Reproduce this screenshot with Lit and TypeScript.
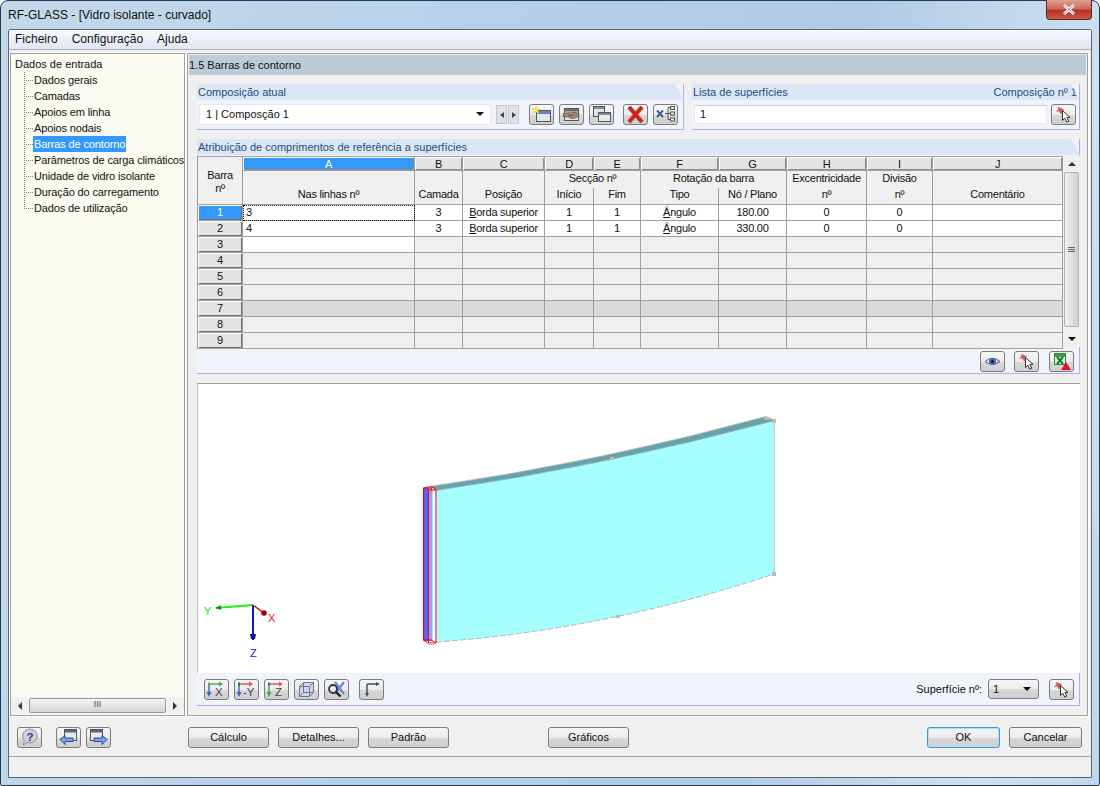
import { css, html, LitElement, TemplateResult } from "lit";
import { customElement } from "lit/decorators.js";

const pin = html`<svg viewBox="0 0 23 19" width="23" height="19">
  <path d="M6 2l6 2.500-2 1 1 2.500-2 1-2-3-2.500 1 2-3z" fill="#e0505c" stroke="#c08088" stroke-width=".5" />
  <path d="M10.500 5.500v10l2.300-2.300 2 4 2-1-2-3.800h3.200z" fill="#fff" stroke="#333" />
</svg>`;

const axisView = (a: string, b: string, c: string, label: string) => html`<svg viewBox="0 0 23 19" width="23" height="19">
  <path d="M4 4h11" stroke=${a} stroke-width="1.500" /><path d="M14 1.500l4 2.500-4 2.500z" fill=${a} />
  <path d="M4 3v10" stroke=${b} stroke-width="1.500" /><path d="M1.500 12l2.500 5 2.500-5z" fill=${b} />
  <path d="M3 4h2" stroke=${c} stroke-width="3" />
  <text x=${label.length > 1 ? 8 : 10} y="16" font-size="11.500" fill="#444" font-family="Liberation Sans">${label}</text>
</svg>`;

const ICONS: Record<string, TemplateResult> = {
  pin,
  eye: html`<svg viewBox="0 0 23 19" width="23" height="19">
    <path d="M4 9.500Q11.500 3 19 9.500Q11.500 15 4 9.500z" fill="#e8e8f0" stroke="#555" />
    <circle cx="11.500" cy="9.500" r="3.600" fill="#4468d4" /><circle cx="11.500" cy="9.500" r="1.500" fill="#111" />
  </svg>`,
  excel: html`<svg viewBox="0 0 23 19" width="23" height="19">
    <rect x="4.500" y="1.500" width="11" height="11" fill="#d8efd8" stroke="#2e8b3c" />
    <rect x="5" y="2" width="10" height="3" fill="#3aa04c" />
    <path d="M7 5l6 7M13 5l-6 7" stroke="#1e7a30" stroke-width="2" />
    <path d="M11 18l5-8 5 8z" fill="#e01020" />
  </svg>`,
  add: html`<svg viewBox="0 0 23 19" width="23" height="19">
    <rect x="6.500" y="5.500" width="14" height="11" fill="#e4e8ee" stroke="#555" />
    <rect x="7" y="6" width="13" height="3" fill="#6488bc" />
    <path d="M6 1l1.200 2.600 2.800.3-2.100 1.800.7 2.800L6 7 3.400 8.500l.7-2.800L2 3.900l2.800-.3z" fill="#f8e860" stroke="#d8c440" stroke-width=".5" />
  </svg>`,
  hand: html`<svg viewBox="0 0 23 19" width="23" height="19">
    <rect x="4.500" y="3.500" width="14" height="12" fill="#e0e0e0" stroke="#555" />
    <rect x="5" y="4" width="13" height="2.500" fill="#6a6a6a" />
    <path d="M3 9l5-1.500 3 .5 3-1 5 1.500v2.500l-4 2-3.500.5-3-1.500-5.500-.5z" fill="#a08878" stroke="#4a3830" stroke-width=".6" />
    <path d="M8 10l3 .5 3-1" stroke="#4a3830" stroke-width=".6" fill="none" />
  </svg>`,
  copy: html`<svg viewBox="0 0 23 19" width="23" height="19">
    <rect x="3.500" y="1.500" width="11" height="10" fill="#e4e4e4" stroke="#555" />
    <rect x="4" y="2" width="10" height="2" fill="#7a90aa" />
    <rect x="8.500" y="7.500" width="12" height="9" fill="#ececec" stroke="#555" />
    <rect x="9" y="8" width="11" height="2" fill="#7a90aa" />
  </svg>`,
  remove: html`<svg viewBox="0 0 23 19" width="23" height="19">
    <path d="M5 2l13 15M18 2L5 17" stroke="#a8706c" stroke-width="4.500" />
    <path d="M5 2l13 15M18 2L5 17" stroke="#d81e1a" stroke-width="3" />
  </svg>`,
  tree: html`<svg viewBox="0 0 23 19" width="23" height="19">
    <path d="M3 5.500l6 6.500M9 5.500L3 12" stroke="#3a5ca8" stroke-width="2" />
    <path d="M11 8.500h3M14 2.500v12M14 2.500h2M14 8.500h2M14 14.500h2" stroke="#555" fill="none" />
    <rect x="16.500" y="1.500" width="4" height="3" fill="#e8e8e8" stroke="#555" />
    <rect x="16.500" y="7" width="4" height="3" fill="#e8e8e8" stroke="#555" />
    <rect x="16.500" y="13" width="4" height="3" fill="#e8e8e8" stroke="#555" />
  </svg>`,
  viewX: axisView("#40b050", "#3c68c8", "#70a060", "X"),
  viewY: axisView("#e05858", "#3c68c8", "#1e7a30", "-Y"),
  viewZ: axisView("#e05858", "#38b050", "#3c68c8", "Z"),
  cube: html`<svg viewBox="0 0 23 19" width="23" height="19">
    <path d="M8.500 2.500h10v10l-4 4h-10v-10z" fill="#ccd4e6" stroke="#6a7898" />
    <path d="M4.500 6.500h10v10M14.500 6.500l4-4M8.500 2.500v10h10M8.500 12.500l-4 4" fill="none" stroke="#6a7898" />
  </svg>`,
  zoomX: html`<svg viewBox="0 0 23 19" width="23" height="19">
    <path d="M10 2l9 12M19 2l-9 12" stroke="#6488dc" stroke-width="2.200" />
    <circle cx="8" cy="9" r="4" fill="none" stroke="#333" stroke-width="1.800" />
    <path d="M11 12l4.500 4.500" stroke="#222" stroke-width="2.400" />
  </svg>`,
  axes: html`<svg viewBox="0 0 23 19" width="23" height="19">
    <path d="M7 4h10M7 4v10" stroke="#3f4f74" stroke-width="1.500" fill="none" />
    <path d="M16 2l4 2-4 2zM5 13l2 4 2-4z" fill="#3f4f74" />
  </svg>`,
  help: html`<svg viewBox="0 0 23 19" width="23" height="19">
    <path d="M12 1a7.500 7 0 1 1-3 13.500L5.500 17.500l.8-5A7.500 7 0 0 1 12 1z" fill="#ccd0da" stroke="#8890a4" />
    <text x="12" y="12.500" text-anchor="middle" font-size="11.500" font-weight="700" fill="#303c70" font-family="Liberation Sans">?</text>
  </svg>`,
  back: html`<svg viewBox="0 0 23 19" width="23" height="19">
    <rect x="7.500" y="1.500" width="12" height="11" fill="#e8eaf0" stroke="#555" />
    <rect x="8" y="2" width="11" height="2.500" fill="#556684" />
    <path d="M3 11.500l5-4v2.500h8v3.500H8V16.500z" fill="#78a4e4" stroke="#2a4a90" />
  </svg>`,
  forward: html`<svg viewBox="0 0 23 19" width="23" height="19">
    <rect x="3.500" y="1.500" width="12" height="11" fill="#e8eaf0" stroke="#555" />
    <rect x="4" y="2" width="11" height="2.500" fill="#556684" />
    <path d="M20 11.500l-5-4v2.500H7v3.500h8V16.500z" fill="#78a4e4" stroke="#2a4a90" />
  </svg>`,
};

const TREE_ITEMS = [
  "Dados gerais",
  "Camadas",
  "Apoios em linha",
  "Apoios nodais",
  "Barras de contorno",
  "Parâmetros de carga climáticos",
  "Unidade de vidro isolante",
  "Duração do carregamento",
  "Dados de utilização",
];

const COLUMNS = [45, 172, 48, 82, 49, 47, 78, 68, 80, 66, 130];
const LETTERS = ["A", "B", "C", "D", "E", "F", "G", "H", "I", "J"];

const ROWS = [
  ["3", "3", "B|orda superior", "1", "1", "Â|ngulo", "180.00", "0", "0", ""],
  ["4", "3", "B|orda superior", "1", "1", "Â|ngulo", "330.00", "0", "0", ""],
];

@customElement("app-root")
export class AppRoot extends LitElement {
  static styles = css`
    * {
      box-sizing: border-box;
      margin: 0;
      padding: 0;
    }

    :host {
      display: block;
      width: 1100px;
      height: 786px;
      overflow: hidden;
      font-family: "Liberation Sans", Arial, sans-serif;
      font-size: 11px;
      line-height: 14px;
      color: #111;
    }

    .window {
      width: 1100px;
      height: 786px;
      display: flex;
      flex-direction: column;
      padding: 0 7px 7px 7px;
      border: 1px solid #2c3a48;
      border-radius: 8px 8px 2px 2px;
      background: linear-gradient(100deg, #c4d8ea 0%, #b5d1ea 40%, #b0cce6 70%, #cfe0f0 90%, #c0d8ee 100%);
    }

    .titlebar {
      flex: 0 0 28px;
      display: flex;
      justify-content: space-between;
      align-items: flex-start;
    }

    .title {
      font-size: 12px;
      line-height: 28px;
      color: #111;
    }

    .close {
      width: 46px;
      height: 20px;
      margin-top: -1px;
      border: 1px solid #5a2a28;
      border-top: none;
      border-radius: 0 0 4px 4px;
      background: linear-gradient(#e0a090 0%, #cf6a5c 45%, #b8322a 55%, #c85a48 100%);
      display: flex;
      align-items: center;
      justify-content: center;
    }

    .client {
      flex: 1;
      min-height: 0;
      display: flex;
      flex-direction: column;
      background: #f0f0f0;
      border: 1px solid #5b6874;
      border-radius: 2px 2px 0 0;
    }

    .menu {
      flex: 0 0 20px;
      display: flex;
      gap: 14px;
      padding-left: 6px;
      font-size: 12px;
      line-height: 19px;
      background: linear-gradient(#f8fafe, #dfe7f3);
      border-bottom: 1px solid #a8b4c4;
    }

    .work {
      flex: 0 0 666px;
      display: flex;
      gap: 2px;
      padding: 3px 3px 0 1px;
    }

    .tree {
      flex: 0 0 175px;
      min-width: 0;
      display: flex;
      flex-direction: column;
      border: 1px solid #a0a0a0;
      outline: 1px solid #fff;
      background: #fbfbf2;
    }

    .tree-body {
      flex: 1;
      padding: 2px 0 0 4px;
    }

    .tree-root {
      height: 16px;
      line-height: 16px;
    }

    .tree ul {
      list-style: none;
      margin-left: 9px;
      background: repeating-linear-gradient(to bottom, #888 0 1px, transparent 1px 2px) left top / 1px calc(100% - 7px)
        no-repeat;
    }

    .tree li {
      display: flex;
      align-items: center;
      height: 16px;
      line-height: 16px;
      white-space: nowrap;
      letter-spacing: -0.13px;
    }

    .tree li::before {
      content: "";
      flex: 0 0 9px;
      border-top: 1px dotted #888;
    }

    .tree li span {
      padding: 0 1px;
    }

    .tree li.selected span {
      background: #3399ff;
      color: #fff;
    }

    .hscroll {
      flex: 0 0 17px;
      display: flex;
      align-items: center;
      background: #f0f0f0;
      margin-bottom: 1px;
    }

    .hscroll .arrow {
      flex: 0 0 18px;
      display: flex;
      justify-content: center;
    }

    .hscroll .thumb {
      flex: 1;
      height: 15px;
      border: 1px solid #9a9a9a;
      border-radius: 2px;
      background: linear-gradient(#f4f4f4, #d4d4d4);
      text-align: center;
      line-height: 11px;
      font-size: 9px;
      color: #444;
    }

    .tri-l,
    .tri-r,
    .tri-u,
    .tri-d {
      width: 0;
      height: 0;
      border: 3px solid transparent;
    }

    .tri-l {
      border-right: 4px solid #333;
      border-left: none;
      border-top-width: 4px;
      border-bottom-width: 4px;
    }

    .tri-r {
      border-left: 4px solid #333;
      border-right: none;
      border-top-width: 4px;
      border-bottom-width: 4px;
    }

    .tri-u {
      border-bottom: 4px solid #333;
      border-top: none;
      border-left-width: 4px;
      border-right-width: 4px;
    }

    .tri-d {
      border-top: 4px solid #111;
      border-bottom: none;
      border-left-width: 4px;
      border-right-width: 4px;
    }

    .main {
      flex: 1;
      min-width: 0;
      display: flex;
      flex-direction: column;
      border: 1px solid #a0a0a0;
      outline: 1px solid #fff;
      padding: 1px;
    }

    .strip {
      flex: 0 0 20px;
      line-height: 20px;
      padding-left: 0;
      background: #bccbd8;
    }

    .content {
      flex: 1;
      display: flex;
      flex-direction: column;
      gap: 9px;
      padding: 9px 6px 0 8px;
    }

    .top-row {
      display: flex;
      gap: 8px;
    }

    .group {
      display: flex;
      flex-direction: column;
      background: #f0f3fa;
      border-right: 1px solid #a9b0ec;
      border-bottom: 1px solid #a9b0ec;
    }

    .group-head {
      flex: 0 0 16px;
      display: flex;
      justify-content: space-between;
      padding: 1px 3px 0 1px;
      line-height: 15px;
      color: #24507e;
      background: #dce6f4;
      clip-path: polygon(0 0, calc(100% - 9px) 0, 100% 100%, 0 100%);
      margin-right: -1px;
    }

    .current {
      flex: 0 0 487px;
      height: 46px;
    }

    .surfaces {
      flex: 0 0 388px;
      height: 46px;
    }

    .group-body {
      flex: 1;
      display: flex;
      align-items: center;
      padding: 0 3px 0 2px;
    }

    .combo {
      width: 292px;
      height: 21px;
      display: flex;
      align-items: center;
      justify-content: space-between;
      padding: 0 6px 1px 6px;
      background: #fff;
      border: 1px solid #e4e8f2;
      border-radius: 2px;
    }

    .spin {
      display: flex;
      gap: 1px;
      margin-left: 5px;
      margin-right: 10px;
    }

    .spin span {
      width: 11px;
      height: 19px;
      display: flex;
      align-items: center;
      justify-content: center;
      background: #dfe1e6;
      border: 1px solid #c4c8d0;
    }

    .spin .tri-l,
    .spin .tri-r {
      border-top-width: 3px;
      border-bottom-width: 3px;
      border-left-color: #345;
      border-right-color: #345;
    }

    .tools {
      display: flex;
      gap: 5px;
    }

    .tools.split {
      margin-left: 9px;
    }

    .icon-btn {
      flex: 0 0 25px;
      width: 25px;
      height: 21px;
      display: flex;
      align-items: center;
      justify-content: center;
      border: 1px solid #7c7c7c;
      border-radius: 3px;
      background: linear-gradient(#f6f6f6 0%, #ececec 50%, #d8d8d8 52%, #cfcfcf 100%);
    }

    .text-input {
      flex: 1;
      height: 19px;
      padding-left: 5px;
      line-height: 17px;
      margin-right: 4px;
      background: #fff;
      border: 1px solid #e4e8f2;
      border-top-color: #c8ccd4;
    }

    .table-group {
      height: 235px;
    }

    .grid-wrap {
      display: flex;
      padding-top: 1px;
    }

    table {
      width: 865px;
      flex: 0 0 865px;
      table-layout: fixed;
      border-collapse: collapse;
      background: #f0f0f0;
      line-height: 13px;
      letter-spacing: -0.25px;
    }

    th,
    td {
      border: 1px solid #a0a0a0;
      font-weight: 400;
      text-align: center;
      white-space: nowrap;
      overflow: hidden;
    }

    tr.letters th {
      height: 14px;
      line-height: 12px;
      background: #e4e4e4;
      box-shadow: inset 1px 1px 0 #fff, inset -1px -1px 0 #8c8c8c;
    }

    tr.letters th.corner {
      background: #f0f0f0;
      box-shadow: none;
      vertical-align: middle;
    }

    tr.letters th.on {
      background: #3399ff;
      color: #fff;
    }

    tr.sub-a th {
      height: 17px;
    }

    tr.sub-b th {
      height: 17px;
    }

    th.bottom {
      vertical-align: bottom;
      padding-bottom: 3px;
    }

    th.no-bottom {
      border-bottom: none;
      padding-bottom: 1px;
    }

    th.no-top {
      border-top: none;
      padding-bottom: 2px;
    }

    .corner-label {
      display: block;
      line-height: 12px;
      margin-top: 1px;
    }

    tbody tr {
      height: 16px;
    }

    tbody th {
      background: #e3e3e3;
      box-shadow: inset 1px 1px 0 #fff, inset -1px -1px 0 #707070;
    }

    tbody th.on {
      background: #3399ff;
      color: #fff;
    }

    tbody td {
      background: #efefef;
    }

    tbody td.filled {
      background: #fff;
    }

    tbody td.left {
      text-align: left;
      padding-left: 3px;
    }

    tbody td.focus {
      outline: 1px dotted #111;
      outline-offset: -1px;
    }

    tbody tr.band td {
      background: #dbdbdb;
    }

    .vscroll {
      flex: 0 0 17px;
      height: 191px;
      display: flex;
      flex-direction: column;
      background: #f0f0f0;
    }

    .vscroll .arrow {
      flex: 0 0 16px;
      display: flex;
      align-items: center;
      justify-content: center;
    }

    .vscroll .thumb {
      flex: 1;
      display: flex;
      align-items: center;
      justify-content: center;
      border: 1px solid #b0b0b0;
      border-radius: 2px;
      margin: 0 1px 4px;
      background: linear-gradient(90deg, #f2f2f2, #cfcfcf);
    }

    .grip {
      width: 7px;
      height: 5px;
      border-top: 1px solid #666;
      border-bottom: 1px solid #666;
      background: linear-gradient(#666, #666) center / 100% 1px no-repeat;
    }

    .table-tools {
      flex: 1;
      display: flex;
      justify-content: flex-end;
      align-items: flex-start;
      gap: 9px;
      padding: 2px 5px 0 0;
    }

    .table-tools .icon-btn:last-child {
      margin-left: 1px;
    }

    .view-group {
      height: 323px;
    }

    .canvas {
      flex: 0 0 290px;
      background: #fff;
      border-top: 1px solid #a0a0a0;
      border-left: 1px solid #c0c0c0;
      margin-right: -1px;
    }

    .canvas svg {
      display: block;
    }

    .view-tools {
      flex: 1;
      display: flex;
      align-items: center;
      gap: 5px;
      padding: 0 5px 0 7px;
    }

    .view-tools .gap {
      margin-left: 5px;
    }

    .view-tools .grow {
      flex: 1;
      text-align: right;
      padding-right: 1px;
    }

    .select {
      width: 51px;
      height: 20px;
      display: flex;
      align-items: center;
      justify-content: space-between;
      padding: 0 7px 0 4px;
      border: 1px solid #7c7c7c;
      border-radius: 3px;
      background: linear-gradient(#f6f6f6 0%, #ececec 50%, #d8d8d8 52%, #cfcfcf 100%);
    }

    .actions {
      flex: 0 0 41px;
      display: flex;
      align-items: flex-start;
      padding: 11px 9px 0 8px;
      border-bottom: 1px solid #a0a0a0;
    }

    .actions .nav {
      margin-right: 77px;
    }

    .btn {
      height: 21px;
      width: 81px;
      line-height: 19px;
      text-align: center;
      border: 1px solid #7c7c7c;
      border-radius: 3px;
      background: linear-gradient(#f6f6f6 0%, #ececec 50%, #d8d8d8 52%, #cfcfcf 100%);
    }

    .btn + .btn {
      margin-left: 9px;
    }

    .btn.graphics {
      margin-left: 99px;
    }

    .btn.ok {
      margin-left: auto;
      width: 73px;
      border-color: #3c9ad0;
      box-shadow: inset 0 0 0 1px #a8e0f8;
    }

    .btn.cancel {
      width: 73px;
    }

    .status {
      flex: 1;
    }
  `;

  private iconButton(name: string) {
    return html`<div class="icon-btn">${ICONS[name]}</div>`;
  }

  private renderTree() {
    return html`
      <div class="tree">
        <div class="tree-body">
          <div class="tree-root">Dados de entrada</div>
          <ul>
            ${TREE_ITEMS.map(
              (item, i) => html`<li class=${i === 4 ? "selected" : ""}><span>${item}</span></li>`
            )}
          </ul>
        </div>
        <div class="hscroll">
          <div class="arrow"><div class="tri-l"></div></div>
          <div class="thumb">III</div>
          <div class="arrow"><div class="tri-r"></div></div>
        </div>
      </div>
    `;
  }

  private renderCell(value: string, col: number) {
    const [first, rest] = value.split("|");
    const body = rest === undefined ? value : html`<u>${first}</u>${rest}`;
    const cls = `filled ${col === 0 ? "left" : ""}`;
    return html`<td class=${cls}>${body}</td>`;
  }

  private renderTable() {
    const empty = [3, 4, 5, 6, 7, 8, 9];
    return html`
      <table>
        <colgroup>
          ${COLUMNS.map((w) => html`<col style="width:${w}px" />`)}
        </colgroup>
        <thead>
          <tr class="letters">
            <th class="corner" rowspan="3">
              <span class="corner-label">Barra</span><span class="corner-label">nº</span>
            </th>
            ${LETTERS.map((l, i) => html`<th class=${i === 0 ? "on" : ""}>${l}</th>`)}
          </tr>
          <tr class="sub-a">
            <th class="bottom" rowspan="2">Nas linhas nº</th>
            <th class="bottom" rowspan="2">Camada</th>
            <th class="bottom" rowspan="2">Posição</th>
            <th class="no-bottom" colspan="2">Secção nº</th>
            <th class="no-bottom" colspan="2">Rotação da barra</th>
            <th class="no-bottom">Excentricidade</th>
            <th class="no-bottom">Divisão</th>
            <th class="bottom" rowspan="2">Comentário</th>
          </tr>
          <tr class="sub-b">
            <th class="no-top">Início</th>
            <th class="no-top">Fim</th>
            <th class="no-top">Tipo</th>
            <th class="no-top">Nó / Plano</th>
            <th class="no-top">nº</th>
            <th class="no-top">nº</th>
          </tr>
        </thead>
        <tbody>
          ${ROWS.map(
            (row, r) => html`<tr>
              <th class=${r === 0 ? "on" : ""}>${r + 1}</th>
              ${row.map((v, c) =>
                r === 0 && c === 0
                  ? html`<td class="filled left focus">${v}</td>`
                  : this.renderCell(v, c)
              )}
            </tr>`
          )}
          ${empty.map(
            (n) => html`<tr class=${n === 7 ? "band" : ""}>
              <th>${n}</th>
              ${LETTERS.map((_, c) => html`<td class=${n === 3 && c === 0 ? "filled" : ""}></td>`)}
            </tr>`
          )}
        </tbody>
      </table>
    `;
  }

  private renderModel() {
    return html`
      <svg width="884" height="289" viewBox="198 384 884 289">
        <path d="M436 489Q605 465 774 420V574Q605 630 436 642z" fill="#a6ffff" />
        <path d="M430 486.500Q600 462 766 416.500L775 420.500Q605 466 436 490.500z" fill="#62a4ac" stroke="#b4b0b0" stroke-width=".8" />
        <path d="M774.500 420V574" stroke="#c8c2c8" stroke-width="1" />
        <path d="M436 642Q605 630 774 574" fill="none" stroke="#b4b4b4" stroke-dasharray="6 2" />
        <rect x="423.500" y="488" width="6" height="153" fill="#6060f0" />
        <rect x="429.500" y="489" width="3" height="152" fill="#8aa4f8" />
        <path
          d="M423.500 488v152l4 3h8.500V490l-3-3h-6zM423.500 488h8M428.500 490h7.500M428.500 490v153M431.500 488v2M423.500 640h8l4 3"
          fill="none"
          stroke="#f00000"
        />
        <g fill="#c4b8b8">
          <rect x="764" y="417" width="6" height="3" />
          <rect x="772" y="419" width="4" height="4" />
          <rect x="610" y="457" width="4" height="3" />
          <rect x="616" y="615" width="4" height="3" />
          <rect x="772" y="572" width="4" height="4" />
          <rect x="429" y="643" width="5" height="2" />
        </g>
        <path d="M253 605L216 608" stroke="#18f018" stroke-width="2" />
        <path d="M221 605l-6 3 6 2z" fill="#109018" />
        <path d="M253 605V640" stroke="#0818d8" stroke-width="2" />
        <path d="M250 634h6l-1 5h-4z" fill="#10108c" />
        <path d="M253 605L264 613" stroke="#f01010" stroke-width="1.500" />
        <circle cx="264" cy="613" r="2.800" fill="#a00010" />
        <g font-family="Liberation Sans" font-size="11">
          <text x="204" y="615" fill="#30e030">Y</text>
          <text x="268" y="622" fill="#f01818">X</text>
          <text x="250" y="657" fill="#1020e0">Z</text>
        </g>
      </svg>
    `;
  }

  render() {
    return html`
      <div class="window">
        <div class="titlebar">
          <div class="title">RF-GLASS - [Vidro isolante - curvado]</div>
          <div class="close">
            <svg viewBox="0 0 14 11" width="14" height="11">
              <path d="M2 1l10 9M12 1L2 10" stroke="#fff" stroke-width="3" />
              <path d="M2 1l10 9M12 1L2 10" stroke="#6a5a58" stroke-width=".6" />
            </svg>
          </div>
        </div>
        <div class="client">
          <div class="menu"><span>Ficheiro</span><span>Configuração</span><span>Ajuda</span></div>
          <div class="work">
            ${this.renderTree()}
            <div class="main">
              <div class="strip">1.5 Barras de contorno</div>
              <div class="content">
                <div class="top-row">
                  <section class="group current">
                    <div class="group-head"><span>Composição atual</span></div>
                    <div class="group-body">
                      <div class="combo"><span>1 | Composção 1</span><div class="tri-d"></div></div>
                      <div class="spin">
                        <span><div class="tri-l"></div></span><span><div class="tri-r"></div></span>
                      </div>
                      <div class="tools">${["add", "hand", "copy"].map((n) => this.iconButton(n))}</div>
                      <div class="tools split">${["remove", "tree"].map((n) => this.iconButton(n))}</div>
                    </div>
                  </section>
                  <section class="group surfaces">
                    <div class="group-head"><span>Lista de superfícies</span><span>Composição nº 1</span></div>
                    <div class="group-body">
                      <div class="text-input">1</div>
                      ${this.iconButton("pin")}
                    </div>
                  </section>
                </div>
                <section class="group table-group">
                  <div class="group-head"><span>Atribuição de comprimentos de referência a superfícies</span></div>
                  <div class="grid-wrap">
                    ${this.renderTable()}
                    <div class="vscroll">
                      <div class="arrow"><div class="tri-u"></div></div>
                      <div class="thumb"><div class="grip"></div></div>
                      <div class="arrow"><div class="tri-d"></div></div>
                    </div>
                  </div>
                  <div class="table-tools">${["eye", "pin", "excel"].map((n) => this.iconButton(n))}</div>
                </section>
                <section class="group view-group">
                  <div class="canvas">${this.renderModel()}</div>
                  <div class="view-tools">
                    ${["viewX", "viewY", "viewZ", "cube", "zoomX"].map((n) => this.iconButton(n))}
                    <div class="gap">${this.iconButton("axes")}</div>
                    <div class="grow">Superfície nº:</div>
                    <div class="select"><span>1</span><div class="tri-d"></div></div>
                    <div class="gap">${this.iconButton("pin")}</div>
                  </div>
                </section>
              </div>
            </div>
          </div>
          <div class="actions">
            <div class="tools nav">
              ${this.iconButton("help")}
              <div class="tools split">${["back", "forward"].map((n) => this.iconButton(n))}</div>
            </div>
            <div class="btn">Cálculo</div>
            <div class="btn">Detalhes...</div>
            <div class="btn">Padrão</div>
            <div class="btn graphics">Gráficos</div>
            <div class="btn ok">OK</div>
            <div class="btn cancel">Cancelar</div>
          </div>
          <div class="status"></div>
        </div>
      </div>
    `;
  }
}

declare global {
  interface HTMLElementTagNameMap {
    "app-root": AppRoot;
  }
}
